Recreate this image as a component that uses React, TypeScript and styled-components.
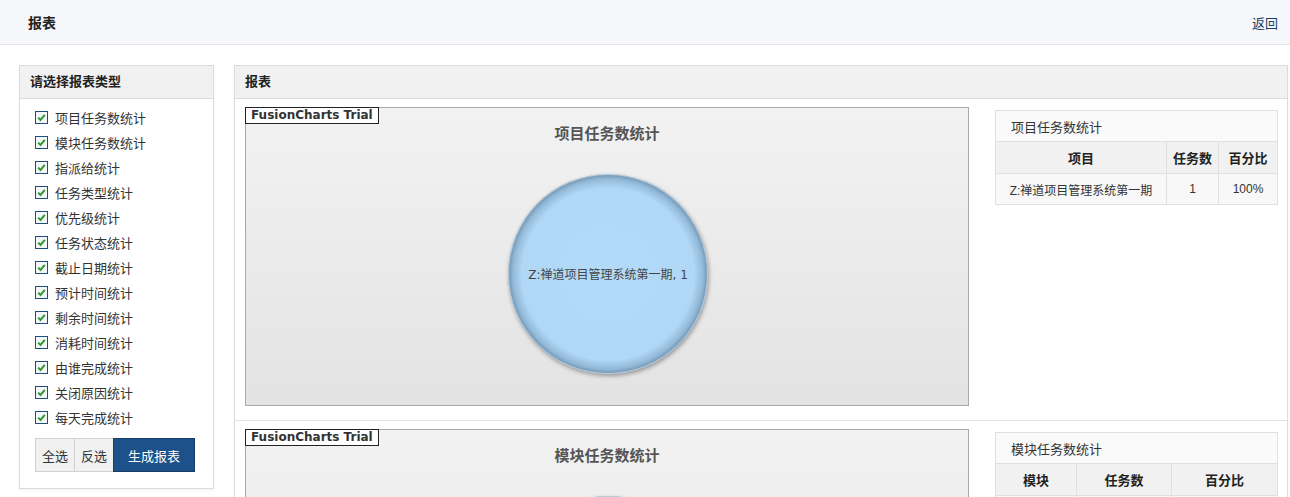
import styled, { createGlobalStyle } from 'styled-components';

const GlobalStyle = createGlobalStyle`
  html, body {
    margin: 0;
    padding: 0;
    overflow: hidden;
    background: #fff;
  }
  body {
    font-family: 'Liberation Sans', 'Noto Sans CJK SC', sans-serif;
    font-size: 13px;
    color: #333;
  }
`;

const reportTypes = [
  '项目任务数统计',
  '模块任务数统计',
  '指派给统计',
  '任务类型统计',
  '优先级统计',
  '任务状态统计',
  '截止日期统计',
  '预计时间统计',
  '剩余时间统计',
  '消耗时间统计',
  '由谁完成统计',
  '关闭原因统计',
  '每天完成统计',
];

type TableDef = {
  caption: string;
  columns: { label: string; width: number }[];
  rows: string[][];
  chartTitle: string;
  pieLabel?: string;
};

const reports: TableDef[] = [
  {
    caption: '项目任务数统计',
    chartTitle: '项目任务数统计',
    columns: [
      { label: '项目', width: 171 },
      { label: '任务数', width: 52 },
      { label: '百分比', width: 59 },
    ],
    rows: [['Z:禅道项目管理系统第一期', '1', '100%']],
    pieLabel: 'Z:禅道项目管理系统第一期, 1',
  },
  {
    caption: '模块任务数统计',
    chartTitle: '模块任务数统计',
    columns: [
      { label: '模块', width: 81 },
      { label: '任务数', width: 95 },
      { label: '百分比', width: 106 },
    ],
    rows: [['/', '1', '100%']],
    pieLabel: '/, 1',
  },
];

function CheckIcon() {
  return (
    <svg width="13" height="13" viewBox="0 0 13 13">
      <rect x="0.5" y="0.5" width="12" height="12" fill="#f4f7fa" stroke="#1e4f7a" />
      <path d="M3.2 6.6 L5.5 9 L9.8 3.8" fill="none" stroke="#2f9a2f" strokeWidth="2" />
    </svg>
  );
}

function Pie({ label }: { label?: string }) {
  return (
    <PieWrap>
      <svg width="214" height="214" viewBox="0 0 214 214">
        <defs>
          <radialGradient id="pieFill" cx="50%" cy="50%" r="50%">
            <stop offset="0%" stopColor="#b3dbf9" />
            <stop offset="86%" stopColor="#b0d7f5" />
            <stop offset="95%" stopColor="#93b9d8" />
            <stop offset="100%" stopColor="#6f93b0" />
          </radialGradient>
          <filter id="pieShadow" x="-10%" y="-10%" width="120%" height="120%">
            <feDropShadow dx="1" dy="2" stdDeviation="2" floodColor="#000" floodOpacity="0.35" />
          </filter>
        </defs>
        <circle cx="107" cy="107" r="100" fill="url(#pieFill)" filter="url(#pieShadow)" />
        <circle cx="107" cy="107" r="99.5" fill="none" stroke="#e8f2fa" strokeOpacity="0.6" />
      </svg>
      {label && <PieLabel>{label}</PieLabel>}
    </PieWrap>
  );
}

export default function App() {
  return (
    <>
      <GlobalStyle />
      <TopBar>
        <PageTitle>报表</PageTitle>
        <BackLink href="#">返回</BackLink>
      </TopBar>
      <Content>
        <SidePanel>
          <PanelHeading>请选择报表类型</PanelHeading>
          <CheckList>
            {reportTypes.map((t) => (
              <CheckItem key={t}>
                <CheckIcon />
                <span>{t}</span>
              </CheckItem>
            ))}
            <ButtonGroup>
              <Btn>全选</Btn>
              <Btn>反选</Btn>
              <Btn primary>生成报表</Btn>
            </ButtonGroup>
          </CheckList>
        </SidePanel>
        <MainPanel>
          <PanelHeading>报表</PanelHeading>
          {reports.map((r) => (
            <ReportRow key={r.caption}>
              <ChartBox>
                <TrialBadge>FusionCharts Trial</TrialBadge>
                <ChartTitle>{r.chartTitle}</ChartTitle>
                <Pie label={r.pieLabel} />
              </ChartBox>
              <DataTable>
                <colgroup>
                  {r.columns.map((c) => (
                    <col key={c.label} style={{ width: c.width }} />
                  ))}
                </colgroup>
                <thead>
                  <tr>
                    <Caption colSpan={r.columns.length}>{r.caption}</Caption>
                  </tr>
                  <tr>
                    {r.columns.map((c) => (
                      <Th key={c.label}>{c.label}</Th>
                    ))}
                  </tr>
                </thead>
                <tbody>
                  {r.rows.map((row, i) => (
                    <tr key={i}>
                      {row.map((cell, j) => (
                        <Td key={j}>{cell}</Td>
                      ))}
                    </tr>
                  ))}
                </tbody>
              </DataTable>
            </ReportRow>
          ))}
        </MainPanel>
      </Content>
    </>
  );
}

const TopBar = styled.header`
  height: 44px;
  display: flex;
  align-items: center;
  justify-content: space-between;
  padding: 0 12px 0 28px;
  background: #f5f7fb;
  border-bottom: 1px solid #e2e4e7;
`;

const PageTitle = styled.h1`
  margin: 0;
  font-size: 14px;
  font-weight: bold;
  color: #222;
`;

const BackLink = styled.a`
  color: #1a3f66;
  text-decoration: none;
  font-size: 13px;
`;

const Content = styled.div`
  display: flex;
  align-items: flex-start;
  gap: 20px;
  padding: 20px 3px 0 19px;
`;

const Panel = styled.section`
  border: 1px solid #dcdcdc;
  background: #fff;
  box-shadow: 0 1px 2px rgba(0, 0, 0, 0.06);
`;

const SidePanel = styled(Panel)`
  width: 193px;
  flex: none;
`;

const MainPanel = styled(Panel)`
  flex: 1;
  height: 600px;
`;

const PanelHeading = styled.div`
  height: 32px;
  line-height: 32px;
  padding: 0 10px;
  background: #f1f1f1;
  border-bottom: 1px solid #dcdcdc;
  font-weight: bold;
  color: #222;
`;

const CheckList = styled.div`
  padding: 6px 0 16px 15px;
`;

const CheckItem = styled.label`
  display: flex;
  align-items: center;
  gap: 7px;
  height: 25px;
  color: #333;
  svg {
    flex: none;
  }
`;

const ButtonGroup = styled.div`
  display: flex;
  margin-top: 8px;
`;

const Btn = styled.button<{ primary?: boolean }>`
  height: 34px;
  padding: 0 ${(p) => (p.primary ? '14px' : '6px')};
  margin-left: -1px;
  font-family: 'Liberation Sans', 'Noto Sans CJK SC', sans-serif;
  font-size: 13px;
  border: 1px solid ${(p) => (p.primary ? '#163d66' : '#d0d0d0')};
  background: ${(p) => (p.primary ? '#1d5189' : '#f1f1f1')};
  color: ${(p) => (p.primary ? '#fff' : '#333')};
  &:first-child {
    margin-left: 0;
  }
`;

const ReportRow = styled.div`
  display: flex;
  align-items: flex-start;
  gap: 26px;
  padding: 8px 9px 14px 10px;
  border-bottom: 1px solid #e2e2e2;
`;

const ChartBox = styled.div`
  position: relative;
  width: 722px;
  height: 297px;
  flex: none;
  border: 1px solid #a9a9a9;
  background: linear-gradient(#f2f2f2, #e3e3e3);
`;

const TrialBadge = styled.div`
  position: absolute;
  left: -1px;
  top: -1px;
  height: 15px;
  line-height: 15px;
  padding: 0 5px;
  border: 1px solid #222;
  background: #fff;
  font-family: 'DejaVu Sans', sans-serif;
  font-weight: bold;
  font-size: 12px;
  color: #333;
`;

const ChartTitle = styled.div`
  padding-top: 14px;
  text-align: center;
  font-size: 15px;
  font-weight: bold;
  color: #555;
  font-family: 'Noto Sans CJK SC', sans-serif;
`;

const PieWrap = styled.div`
  position: relative;
  width: 214px;
  height: 214px;
  margin: 24px auto 0;
  transform: translateX(1px);
`;

const PieLabel = styled.div`
  position: absolute;
  left: 0;
  right: 0;
  top: 98px;
  text-align: center;
  font-size: 12px;
  color: #444;
  font-family: 'DejaVu Sans', 'Noto Sans CJK SC', sans-serif;
`;

const DataTable = styled.table`
  width: 282px;
  margin-top: 3px;
  border-collapse: collapse;
  table-layout: fixed;
  font-size: 12px;
`;

const Caption = styled.th`
  height: 30px;
  text-align: left;
  padding: 0 15px;
  font-weight: normal;
  font-size: 13px;
  color: #333;
  background: #fafafa;
  border: 1px solid #e0e0e0;
`;

const Th = styled.th`
  height: 31px;
  padding: 0;
  font-size: 13px;
  font-weight: bold;
  color: #222;
  background: #f1f1f1;
  border: 1px solid #e0e0e0;
`;

const Td = styled.td`
  height: 30px;
  padding: 0;
  text-align: center;
  font-size: 12px;
  color: #333;
  background: #f8f8f8;
  border: 1px solid #e0e0e0;
  white-space: nowrap;
`;
